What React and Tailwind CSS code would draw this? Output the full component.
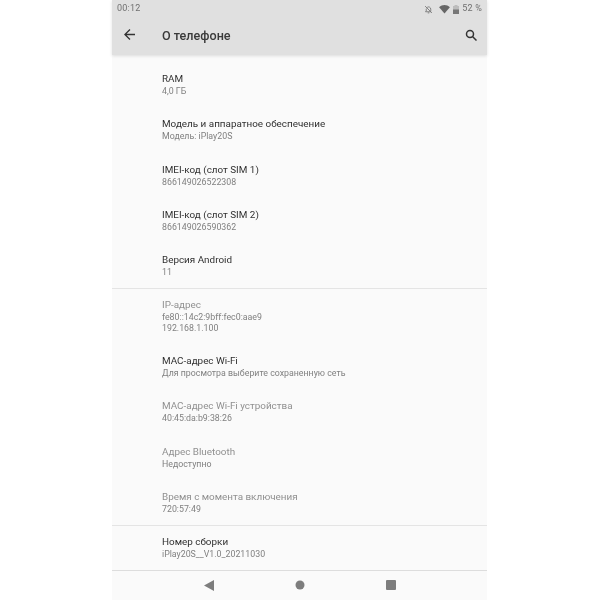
const Row = ({ t, s, dim, h = "h-[45.4px]" }) => (
  <div className={`${h} pl-[50px] flex flex-col justify-center`}>
    <div className={`text-[9.9px] leading-[13px] ${dim ? "text-[#909090]" : "text-[#303030]"}`}>{t}</div>
    <div className="pt-[1px]">
      {s.map((x) => (
        <div key={x} className="text-[8.8px] leading-[11px] text-[#808080]">{x}</div>
      ))}
    </div>
  </div>
);

export default function App() {
  return (
    <div className="w-[600px] h-[600px] bg-white flex justify-center" style={{ fontFamily: "Roboto, sans-serif" }}>
      <div className="w-[375px] h-[600px] ml-[-1px] bg-[#fafafa] flex flex-col blur-[0.3px]">
        <div className="h-[55px] bg-[#e0e0e0] shadow-[0_1px_3px_rgba(0,0,0,0.12)] flex flex-col shrink-0">
          <div className="h-[14px] flex items-center justify-between pl-[5px] pr-[5px] pt-[4px] text-[9px] tracking-[0.2px] text-[#707070]">
            <span>00:12</span>
            <span className="flex items-center gap-[3px]">
              <svg width="9" height="9" viewBox="0 0 24 24" fill="none" stroke="#777777" strokeWidth="2.4">
                <path d="M18 16V11a6 6 0 0 0-9.5-4.8M6.300 9.500C6.100 10 6 10.500 6 11v5l-2 2h15M10 21h4M3 3l18 18" />
              </svg>
              <svg width="11" height="9" viewBox="0 0 24 20" className="ml-[3px]">
                <path d="M12 19 0 5C7-1.500 17-1.500 24 5z" fill="#666666" />
              </svg>
              <svg width="6" height="9" viewBox="0 0 12 18">
                <path d="M3 0h6v2h3v16H0V2h3z" fill="#bdbdbd" />
                <path d="M0 9h12v9H0z" fill="#777777" />
              </svg>
              <span>52 %</span>
            </span>
          </div>
          <div className="flex-1 flex items-center justify-between pl-[12px] pr-[10px] pt-[1px]">
            <div className="flex items-center">
              <svg width="11" height="11" viewBox="0 0 16 16" fill="#333333">
                <path d="M16 7H3.800l5.600-5.600L8 0 0 8l8 8 1.400-1.400L3.800 9H16z" />
              </svg>
              <span className="ml-[27px] pt-[2px] text-[12.6px] font-medium text-[#3a3a3a]">О телефоне</span>
            </div>
            <svg width="12" height="12" viewBox="0 0 24 24" fill="none" stroke="#333333" strokeWidth="3">
              <circle cx="10" cy="10" r="7" />
              <path d="m15 15 8 8" />
            </svg>
          </div>
        </div>

        <div className="flex-1 flex flex-col min-h-0 pt-[6px]">
          <div className="border-b border-[#e4e4e4]">
            <Row t="RAM" s={["4,0 ГБ"]} h="h-[46px]" />
            <Row t="Модель и аппаратное обеспечение" s={["Модель: iPlay20S"]} />
            <Row t="IMEI-код (слот SIM 1)" s={["866149026522308"]} />
            <Row t="IMEI-код (слот SIM 2)" s={["866149026590362"]} />
            <Row t="Версия Android" s={["11"]} h="h-[44.4px]" />
          </div>
          <div className="border-b border-[#e4e4e4]">
            <Row t="IP-адрес" s={["fe80::14c2:9bff:fec0:aae9", "192.168.1.100"]} dim h="h-[55px]" />
            <Row t="MAC-адрес Wi-Fi" s={["Для просмотра выберите сохраненную сеть"]} />
            <Row t="MAC-адрес Wi-Fi устройства" s={["40:45:da:b9:38:26"]} dim />
            <Row t="Адрес Bluetooth" s={["Недоступно"]} dim />
            <Row t="Время с момента включения" s={["720:57:49"]} dim />
          </div>
          <Row t="Номер сборки" s={["iPlay20S__V1.0_20211030"]} h="h-[43px]" />
        </div>

        <div className="h-[30px] shrink-0 border-t border-[#dddddd] bg-[#fafafa] flex items-center justify-center gap-[81px] pb-[1px]">
          <svg width="10" height="11" viewBox="0 0 10 11"><path d="M10 0v11L0 5.500z" fill="#7d7d7d" /></svg>
          <svg width="10" height="10" viewBox="0 0 10 10"><circle cx="5" cy="5" r="4.500" fill="#7d7d7d" /></svg>
          <svg width="10" height="10" viewBox="0 0 10 10"><rect width="10" height="10" rx="1" fill="#7d7d7d" /></svg>
        </div>
      </div>
    </div>
  );
}
